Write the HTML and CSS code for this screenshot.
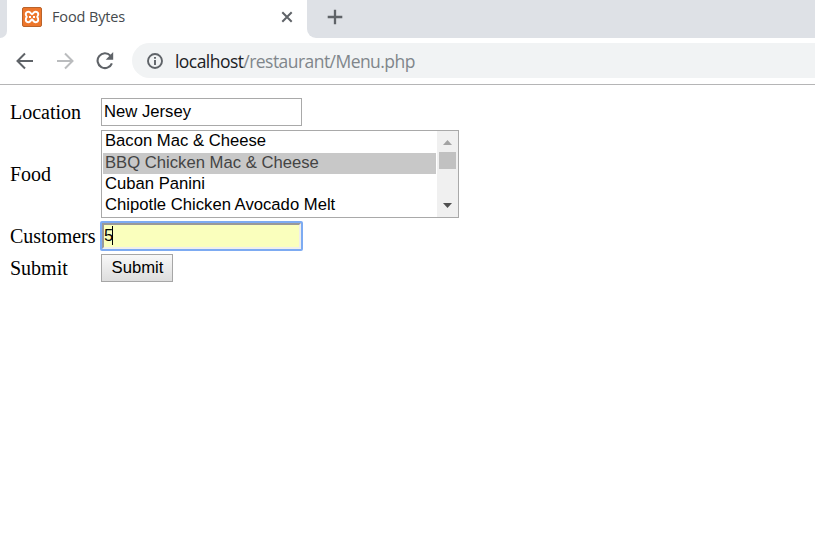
FILE: index.html
```html
<!DOCTYPE html>
<html lang="en">
<head>
<meta charset="utf-8">
<title>Food Bytes</title>
<link rel="stylesheet" href="styles.css">
</head>
<body>
<header class="tabs">
  <div class="strip-edge"></div>
  <div class="tab">
    <svg class="favicon" width="20" height="20" viewBox="0 0 20 20">
      <rect x=".5" y=".5" width="19" height="19" rx="1.5" fill="#ed762b" stroke="#b9632b"/>
      <path d="M10 7.3C8.8 7.3 8.7 4.7 6.5 4.7C3.5 4.7 3 8 4.8 9.9C3 11.8 3.5 15.2 6.5 15.2C8.7 15.2 8.8 12.6 10 12.6S11.3 15.2 13.5 15.2C16.5 15.2 17 11.8 15.2 9.9C17 8 16.5 4.7 13.5 4.7C11.3 4.7 11.2 7.3 10 7.3ZM7 9.9H9M11 9.9H13" fill="none" stroke="#fff" stroke-width="2" stroke-linejoin="round"/>
    </svg>
    <span class="tab-title">Food Bytes</span>
    <svg class="close" width="12" height="12" viewBox="0 0 12 12"><path d="M1.3 1.3 10.7 10.7M10.7 1.3 1.3 10.7" stroke="#5f6368" stroke-width="2"/></svg>
  </div>
  <div class="strip-rest">
    <svg width="16" height="16" viewBox="0 0 16 16"><path d="M8 .7V15.3M.7 8H15.3" stroke="#5f6368" stroke-width="2.3"/></svg>
  </div>
</header>
<nav class="toolbar">
  <svg class="back" width="18" height="18" viewBox="0 0 18 18"><path d="M17 9H2M9 1.5 1.5 9 9 16.5" fill="none" stroke="#5f6368" stroke-width="2"/></svg>
  <svg class="forward" width="18" height="18" viewBox="0 0 18 18"><path d="M1 9H16M9 1.5 16.5 9 9 16.5" fill="none" stroke="#babcbe" stroke-width="2"/></svg>
  <svg class="reload" width="18" height="18" viewBox="0 0 18 18"><path d="M14.4 3.6A7.4 7.4 0 1 0 15.9 11.3" fill="none" stroke="#5f6368" stroke-width="2.1"/><path d="M17.2 0V7.7H9.7Z" fill="#5f6368"/></svg>
  <div class="address">
    <svg width="16" height="16" viewBox="0 0 16 16"><circle cx="8" cy="8" r="7" fill="none" stroke="#5f6368" stroke-width="1.9"/><path d="M8 7V12M8 4V5.8" stroke="#5f6368" stroke-width="1.9"/></svg>
    <span class="url"><span class="host">localhost</span>/restaurant/Menu.php</span>
  </div>
</nav>
<main class="form">
  <span class="label">Location</span>
  <div class="field">New Jersey</div>
  <span class="label">Food</span>
  <div class="list">
    <ul class="options">
      <li>Bacon Mac &amp; Cheese</li>
      <li class="selected">BBQ Chicken Mac &amp; Cheese</li>
      <li>Cuban Panini</li>
      <li>Chipotle Chicken Avocado Melt</li>
    </ul>
    <div class="scrollbar">
      <svg width="9" height="5" viewBox="0 0 9 5"><path d="M0 5 4.5 0 9 5Z" fill="#a3a3a3"/></svg>
      <div class="thumb"></div>
      <svg class="down" width="9" height="5" viewBox="0 0 9 5"><path d="M0 0H9L4.5 5Z" fill="#505050"/></svg>
    </div>
  </div>
  <span class="label">Customers</span>
  <div class="field focused">5<i class="caret"></i></div>
  <span class="label">Submit</span>
  <button class="submit">Submit</button>
</main>
</body>
</html>
```
FILE: styles.css
```css
* { box-sizing: border-box; }
body { margin: 0; background: #fff; overflow: hidden; }
svg { display: block; flex: none; }

.tabs { display: flex; height: 38px; background: linear-gradient(#fff, #fff) 0 0 / 320px 38px no-repeat, #dee1e6; }
.strip-edge { width: 7px; background: #dee1e6; border-bottom-right-radius: 7px; }
.tab { display: flex; align-items: center; width: 300px; padding: 0 14px 4px 15px; background: #fff; }
.tab-title { flex: 1; margin-left: 10px; font: 14.5px/20px "Open Sans", sans-serif; letter-spacing: -.13px; color: #45494d; }
.strip-rest { flex: 1; padding: 9px 0 0 20px; background: #dee1e6; border-bottom-left-radius: 9px; }

.toolbar { display: flex; align-items: center; height: 47px; padding: 0 0 1px 16px; border-bottom: 1px solid #b5b5b6; }
.forward { margin-left: 22px; }
.reload { margin-left: 22px; }
.address { display: flex; align-items: center; flex: 1; height: 35px; margin-left: 18px; padding-left: 15px; background: #f1f3f4; border-radius: 18px 0 0 18px; }
.url { margin-left: 12px; font: 17.5px/24px "Open Sans", sans-serif; letter-spacing: -.55px; color: #80868b; white-space: nowrap; }
.host { color: #202124; }

.form { display: grid; grid-template-columns: 87px 358px; grid-template-rows: 28px 88px 28px 28px; gap: 4px; align-items: center; padding: 13px 0 0 10px; font: 20px/24px "Liberation Serif", serif; color: #000; }
.label { padding-bottom: 1px; }
.field, .list, .submit { font: 16.67px/21px "Liberation Sans", sans-serif; }
.field { width: 201px; height: 28px; padding: 2px; border: 1px solid #a9a9a9; }
.focused { display: flex; padding: 0; background: #faffbd; border: 3px solid; border-color: #999 #eee #eee #999; outline: 2px solid #7dabf2; outline-offset: -1px; border-radius: 1px; }
.caret { width: 1px; height: 19px; margin: 1px 0 0 -1px; background: #000; }
.list { display: flex; height: 88px; border: 1px solid #a9a9a9; }
.options { flex: 1; margin: 0; padding: 0 1px; list-style: none; white-space: nowrap; }
.options li { height: 21px; padding-left: 2px; line-height: 20px; }
.options li:first-child { height: 22px; }
.options .selected { color: #444; background: #c8c8c8; }
.scrollbar { display: flex; flex-direction: column; align-items: center; width: 21px; padding: 9px 0; background: #f0f0f0; }
.thumb { width: 17px; height: 17px; margin-top: 7px; background: #c1c1c1; }
.down { margin-top: auto; }
.submit { width: 72px; height: 28px; padding: 0 0 2px 1px; color: #000; background: linear-gradient(#f8f8f8, #ddd); border: 1px solid #a6a6a6; border-radius: 0; }
```
